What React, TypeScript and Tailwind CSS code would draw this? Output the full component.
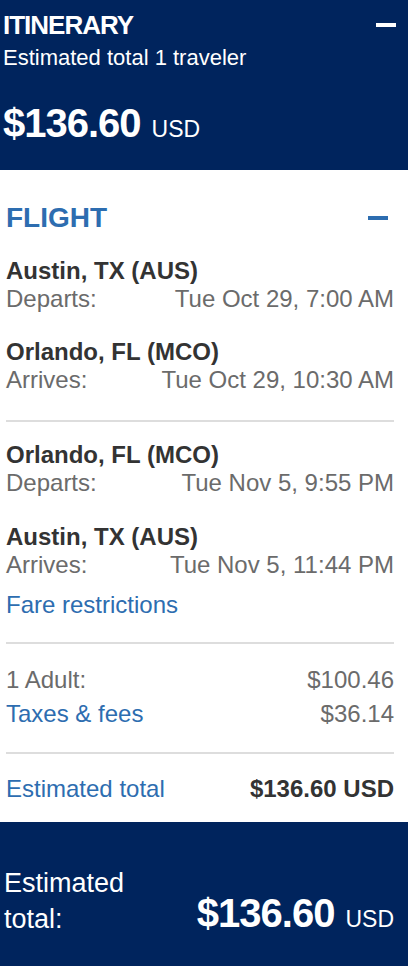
import React from 'react';

const navy = 'bg-[#00245d]';

function Minus({ className }: { className: string }) {
  return <span className={`block h-[4px] w-[20px] ${className}`} />;
}

function Stop({ city, label, time }: { city: string; label: string; time: string }) {
  return (
    <div>
      <div className="font-bold text-[#333333] leading-[28px]">{city}</div>
      <div className="flex justify-between text-[#6b6b6b] leading-[28px]">
        <span>{label}</span>
        <span>{time}</span>
      </div>
    </div>
  );
}

export default function App() {
  return (
    <div className="w-[408px] min-h-[966px] bg-white font-['Liberation_Sans',Arial,sans-serif]">
      {/* header */}
      <div className={`${navy} h-[170px] pl-[3px] pr-[12px] pt-[10px] text-white`}>
        <div className="flex items-center justify-between">
          <div className="text-[26px] font-bold leading-[30px] tracking-[-1px]">ITINERARY</div>
          <Minus className="bg-white" />
        </div>
        <div className="mt-[4px] text-[22px] leading-[28px]">Estimated total 1 traveler</div>
        <div className="mt-[27px] flex items-baseline gap-[11px]">
          <span className="text-[40px] font-bold leading-[48px] tracking-[-1px]">$136.60</span>
          <span className="text-[23px]">USD</span>
        </div>
      </div>

      {/* flight details */}
      <div className="pl-[6px] pr-[14px] pt-[31px] pb-[19px] text-[24px]">
        <div className="flex items-center justify-between">
          <div className="text-[28px] font-bold leading-[34px] text-[#2d6db0]">FLIGHT</div>
          <Minus className="mr-[6px] bg-[#2d6db0]" />
        </div>

        <div className="mt-[22px]">
          <Stop city="Austin, TX (AUS)" label="Departs:" time="Tue Oct 29, 7:00 AM" />
        </div>
        <div className="mt-[25px]">
          <Stop city="Orlando, FL (MCO)" label="Arrives:" time="Tue Oct 29, 10:30 AM" />
        </div>

        <div className="mt-[26px] h-[2px] bg-[#dddddd]" />

        <div className="mt-[19px]">
          <Stop city="Orlando, FL (MCO)" label="Departs:" time="Tue Nov 5, 9:55 PM" />
        </div>
        <div className="mt-[26px]">
          <Stop city="Austin, TX (AUS)" label="Arrives:" time="Tue Nov 5, 11:44 PM" />
        </div>
        <div className="mt-[12px] leading-[28px] text-[#2d6db0]">Fare restrictions</div>

        <div className="mt-[23px] h-[2px] bg-[#dddddd]" />

        <div className="mt-[22px] flex justify-between leading-[28px] text-[#6b6b6b]">
          <span>1 Adult:</span>
          <span>$100.46</span>
        </div>
        <div className="mt-[6px] flex justify-between leading-[28px]">
          <span className="text-[#2d6db0]">Taxes &amp; fees</span>
          <span className="text-[#6b6b6b]">$36.14</span>
        </div>

        <div className="mt-[24px] h-[2px] bg-[#dddddd]" />

        <div className="mt-[21px] flex justify-between leading-[28px]">
          <span className="text-[#2d6db0]">Estimated total</span>
          <span className="font-bold text-[#333333]">$136.60 USD</span>
        </div>
      </div>

      {/* footer total */}
      <div className={`${navy} flex h-[144px] items-end justify-between pl-[4px] pr-[14px] pb-[29px] text-white`}>
        <div className="text-[27px] leading-[36px]">
          Estimated
          <br />
          total:
        </div>
        <div className="flex items-baseline gap-[11px]">
          <span className="text-[40px] font-bold leading-[48px] tracking-[-1px]">$136.60</span>
          <span className="text-[23px]">USD</span>
        </div>
      </div>
    </div>
  );
}
